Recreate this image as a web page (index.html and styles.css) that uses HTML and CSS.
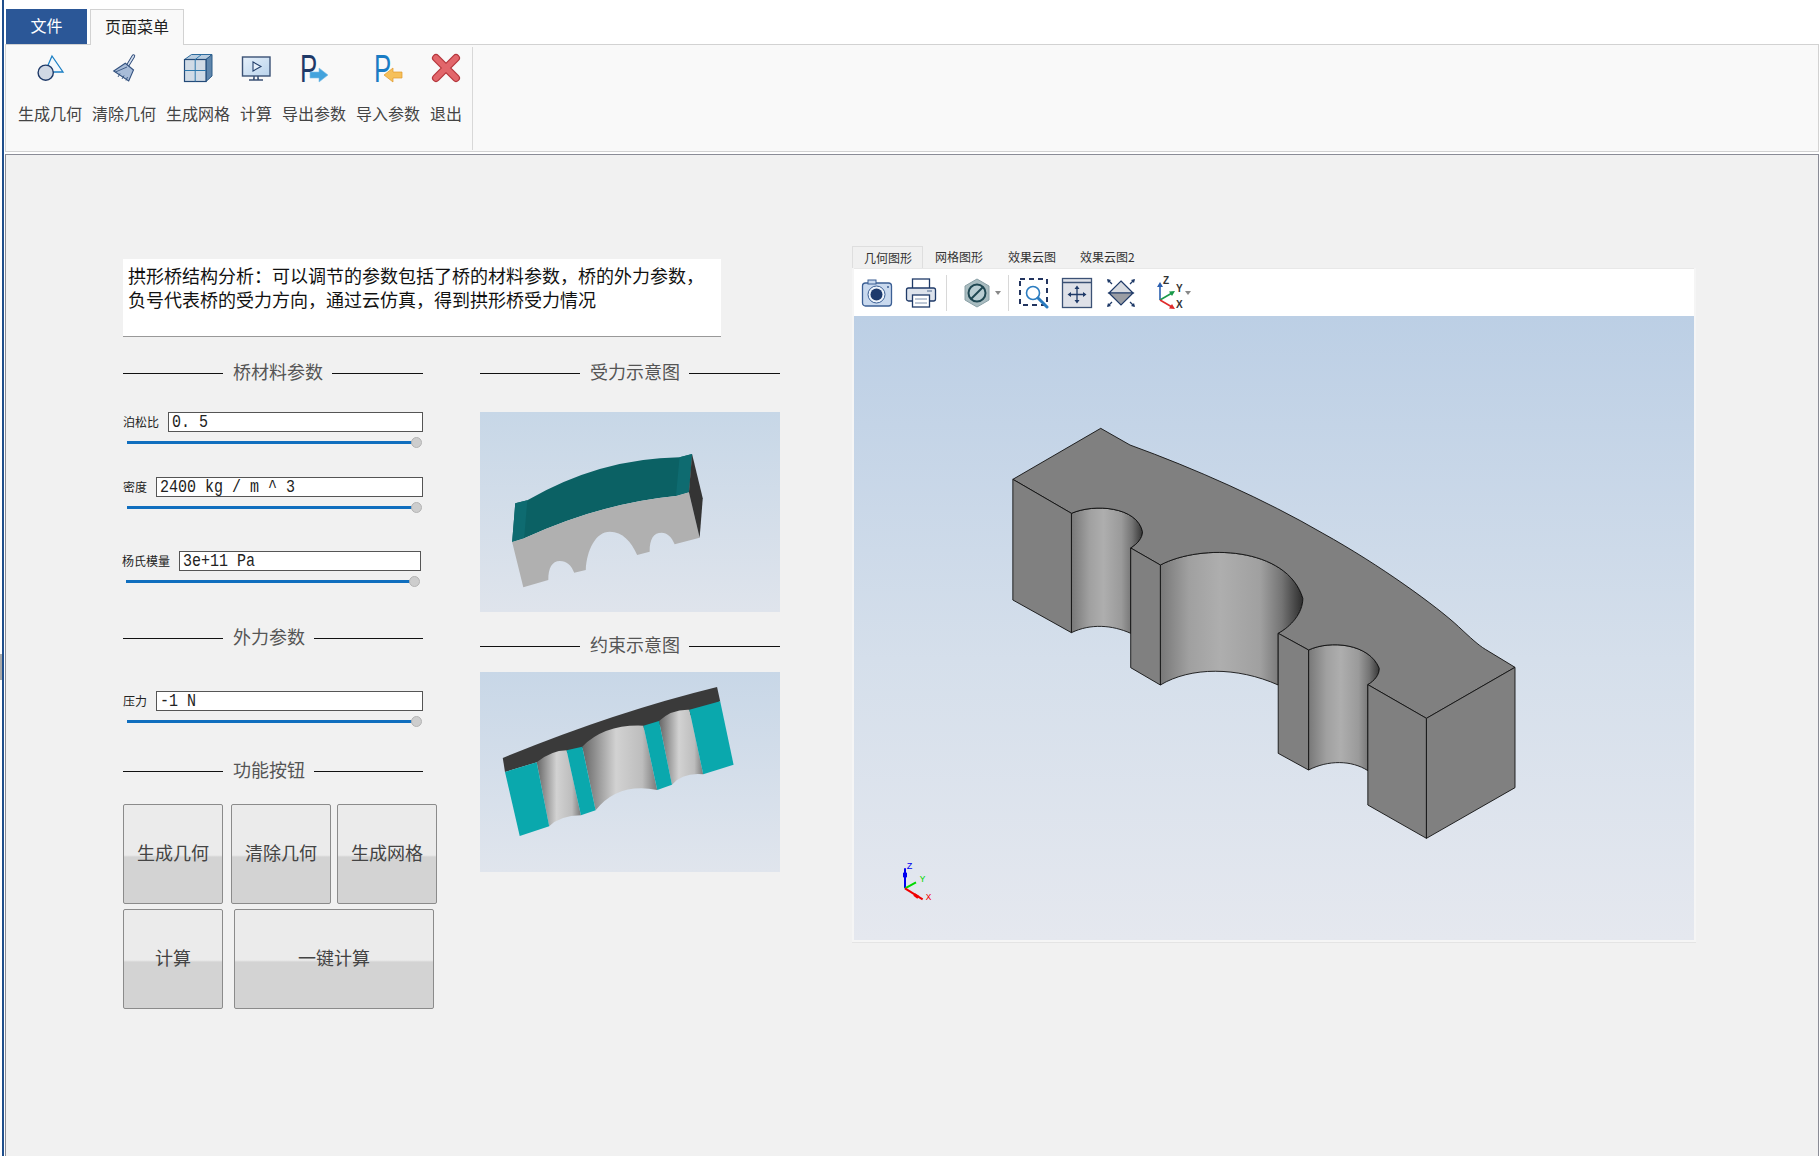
FILE: index.html
```html
<!DOCTYPE html>
<html lang="zh-CN">
<head>
<meta charset="utf-8">
<title>拱形桥结构分析</title>
<link rel="stylesheet" href="styles.css">
</head>
<body>
<div class="edge-notch"></div>
<div class="app">
  <nav class="tabs">
    <div class="tab-file">文件</div>
    <div class="tab-page">页面菜单</div>
  </nav>
  <section class="ribbon">
    <div class="ribbon-item">
      <svg class="ribbon-icon" viewBox="0 0 32 32"><polygon points="18,4 29,20 11,20" fill="#f4f8fc" stroke="#1b7fc4" stroke-width="1.3"/><circle cx="11.7" cy="20.7" r="7.6" fill="#d0d8e4" stroke="#1f3a68" stroke-width="1.4"/></svg>
      <span>生成几何</span>
    </div>
    <div class="ribbon-item">
      <svg class="ribbon-icon" viewBox="0 0 32 32"><path d="M25.5 4 19 14.700" stroke="#2d4a7a" stroke-width="3.400" stroke-linecap="round"/><path d="M25.5 4 19 14.700" stroke="#d5e0ee" stroke-width="1.600" stroke-linecap="round"/><polygon points="5.700,19 17.300,11.300 25.500,18 20.700,29" fill="#a8bcd8" stroke="#34527f" stroke-width="1.100"/><path d="M10 25 12 21.500M14 27 16 23.500M18 28.500 19.500 25M7.500 20 19 15" stroke="#34527f" stroke-width=".9"/></svg>
      <span>清除几何</span>
    </div>
    <div class="ribbon-item">
      <svg class="ribbon-icon" viewBox="0 0 32 32"><polygon points="2.500,7.500 9.500,2.500 30,2.500 24,7.500" fill="#b9cde0" stroke="#2d6a9c"/><polygon points="24,7.500 30,2.500 30,24 24,29.500" fill="#5f86ac" stroke="#2d5c88"/><rect x="2.500" y="7.500" width="21.500" height="22" fill="#d0dbe6" stroke="#234a78" stroke-width="1.200"/><path d="M13.200 7.500V29.500M2.500 18.500H24M13.200 7.500 19.500 2.500" stroke="#2d78ac" fill="none"/></svg>
      <span>生成网格</span>
    </div>
    <div class="ribbon-item">
      <svg class="ribbon-icon" viewBox="0 0 32 32"><defs><linearGradient id="scr" x1="0" y1="0" x2="1" y2="1"><stop offset="0" stop-color="#e6f0fa"/><stop offset="1" stop-color="#b9d3ec"/></linearGradient></defs><rect x="2.500" y="5" width="27.500" height="19" fill="url(#scr)" stroke="#3b5275" stroke-width="1.400"/><polygon points="13,10 13,19 21,14.500" fill="#e6f0fa" stroke="#24406c" stroke-width="1.100"/><path d="M14 24v3h-1M18 24v3h1M9 28h14" stroke="#3b5275" stroke-width="1.500" fill="none"/></svg>
      <span>计算</span>
    </div>
    <div class="ribbon-item">
      <svg class="ribbon-icon ribbon-icon-tall" viewBox="0 -6 32 44"><text class="icon-letter icon-letter-dark" transform="translate(2 30) scale(.68 1)" x="0" y="0">P</text><polygon points="12,20 21,20 21,16 30,23 21,30 21,26 12,26" fill="#43a3dd" stroke="#7cc0ea" stroke-width=".6"/></svg>
      <span>导出参数</span>
    </div>
    <div class="ribbon-item">
      <svg class="ribbon-icon ribbon-icon-tall" viewBox="0 -6 32 44"><text class="icon-letter icon-letter-blue" transform="translate(2 30) scale(.68 1)" x="0" y="0">P</text><polygon points="30,20 21,20 21,16 12,23 21,30 21,26 30,26" fill="#f6c05a" stroke="#e09a2b" stroke-width=".7"/></svg>
      <span>导入参数</span>
    </div>
    <div class="ribbon-item">
      <svg class="ribbon-icon" viewBox="0 0 32 32"><path d="M6 6 26 26M26 6 6 26" stroke="#b5363c" stroke-width="8" stroke-linecap="round"/><path d="M6 6 26 26M26 6 6 26" stroke="#e2666b" stroke-width="5.600" stroke-linecap="round"/></svg>
      <span>退出</span>
    </div>
    <div class="ribbon-sep"></div>
  </section>
  <main class="main">
    <div class="left">
      <p class="desc">拱形桥结构分析：可以调节的参数包括了桥的材料参数，桥的外力参数，<br>负号代表桥的受力方向，通过云仿真，得到拱形桥受力情况</p>
      <div class="cols">
        <div class="col-params">
          <div class="section section-first"><i class="line-l"></i><b>桥材料参数</b><i class="line-r"></i></div>
          <div class="param param-a">
            <div class="field"><label>泊松比</label><div class="input"><span>0. 5</span></div></div>
            <div class="slider"><i class="track"></i><i class="thumb"></i></div>
          </div>
          <div class="param param-b">
            <div class="field"><label>密度</label><div class="input"><span>2400 kg / m ^ 3</span></div></div>
            <div class="slider"><i class="track"></i><i class="thumb"></i></div>
          </div>
          <div class="param param-c">
            <div class="field"><label>杨氏模量</label><div class="input"><span>3e+11 Pa</span></div></div>
            <div class="slider"><i class="track"></i><i class="thumb"></i></div>
          </div>
          <div class="section section-force"><i class="line-l"></i><b>外力参数</b><i class="line-r"></i></div>
          <div class="param param-d">
            <div class="field"><label>压力</label><div class="input"><span>-1 N</span></div></div>
            <div class="slider"><i class="track"></i><i class="thumb"></i></div>
          </div>
          <div class="section section-btn"><i class="line-l"></i><b>功能按钮</b><i class="line-r"></i></div>
          <div class="btn-row btn-row-1">
            <button class="btn">生成几何</button>
            <button class="btn gap-8">清除几何</button>
            <button class="btn gap-6">生成网格</button>
          </div>
          <div class="btn-row btn-row-2">
            <button class="btn">计算</button>
            <button class="btn btn-wide gap-11">一键计算</button>
          </div>
        </div>
        <div class="col-images">
          <div class="section section-first"><i class="line-l"></i><b>受力示意图</b><i class="line-r"></i></div>
          <svg class="thumb-img thumb-img-1" viewBox="851 516 672 600" preserveAspectRatio="none">
            <defs><linearGradient id="mini1" x1="0" y1="0" x2="0" y2="1"><stop offset="0" stop-color="#c7d7e7"/><stop offset="1" stop-color="#dfe4ec"/></linearGradient></defs>
            <rect x="851" y="516" width="672" height="600" fill="url(#mini1)"/>
            <path d="M930 790 957 781Q1120 655 1298 652L1326 642 1319 757 1290 768Q1120 790 950 895L923 906Z" fill="#0b6164"/>
            <path d="M930 790 957 781 950 895 923 906ZM1298 652 1326 642 1319 757 1290 768Z" fill="#0e6b70"/>
            <path d="M923 906 950 895Q1120 790 1290 768L1319 757 1343 893 1287 913C1280 890 1270 878 1258 878 1240 878 1231 895 1231 935L1203 945C1190 905 1170 875 1142 875 1110 875 1090 930 1088 990L1062 998C1055 975 1045 963 1030 963 1012 963 1004 985 1004 1020L948 1042Z" fill="#b0b0b0"/>
            <polygon points="1326,642 1350,775 1343,893 1319,757" fill="#343434"/>
          </svg>
          <div class="section section-constraint"><i class="line-l"></i><b>约束示意图</b><i class="line-r"></i></div>
          <svg class="thumb-img thumb-img-2" viewBox="851 159 672 600" preserveAspectRatio="none">
            <defs>
              <linearGradient id="mini2" x1="0" y1="0" x2="0" y2="1"><stop offset="0" stop-color="#c8d7e7"/><stop offset="1" stop-color="#e0e5ed"/></linearGradient>
              <linearGradient id="cyl2" x1="0" y1="0" x2="1" y2="0"><stop offset="0" stop-color="#666"/><stop offset=".45" stop-color="#d2d2d2"/><stop offset=".8" stop-color="#bdbdbd"/><stop offset="1" stop-color="#7a7a7a"/></linearGradient>
            </defs>
            <rect x="851" y="159" width="672" height="600" fill="url(#mini2)"/>
            <path d="M902 417Q1150 280 1382 204L1389 247 1320 290 907 459Z" fill="#3a3a3a"/>
            <path d="M978 430Q1010 395 1045 394L1077 589Q1030 590 1006 622Z" fill="url(#cyl2)"/>
            <path d="M1080 383Q1130 315 1217 320L1248 513Q1160 490 1110 574Z" fill="url(#cyl2)"/>
            <path d="M1252 306Q1280 270 1320 272L1351 466Q1305 460 1281 497Z" fill="url(#cyl2)"/>
            <polygon points="907,459 978,430 1006,622 940,651" fill="#0aa8ad"/>
            <polygon points="1045,394 1080,383 1110,574 1077,589" fill="#0aa8ad"/>
            <polygon points="1217,320 1252,306 1281,497 1248,513" fill="#0aa8ad"/>
            <polygon points="1320,272 1389,247 1419,437 1351,466" fill="#0aa8ad"/>
          </svg>
        </div>
      </div>
    </div>
    <section class="viewer">
      <div class="viewer-tabs">
        <div class="vtab vtab-on">几何图形</div>
        <div class="vtab">网格图形</div>
        <div class="vtab">效果云图</div>
        <div class="vtab">效果云图2</div>
      </div>
      <div class="viewer-frame">
        <div class="toolbar">
          <svg class="tool" viewBox="0 0 32 32"><rect x="1.500" y="6" width="29" height="23" rx="3" fill="#c9d9ee" stroke="#3b5f94" stroke-width="1.300"/><rect x="7" y="3" width="8" height="4" fill="#c9d9ee" stroke="#3b5f94"/><circle cx="15.500" cy="17.500" r="8.500" fill="#eef4fb" stroke="#3b5f94"/><circle cx="15.500" cy="17.500" r="6" fill="#1d3a6d"/><circle cx="27" cy="10" r="1" fill="#3b5f94"/></svg>
          <svg class="tool" viewBox="0 0 32 32"><rect x="7.500" y="2" width="17" height="10" fill="#fff" stroke="#1f3a68" stroke-width="1.300"/><rect x="1.500" y="11" width="29" height="13" rx="2" fill="#dde3ec" stroke="#1f3a68" stroke-width="1.300"/><rect x="7.500" y="18" width="17" height="12" fill="#fff" stroke="#1f3a68" stroke-width="1.300"/><path d="M10 22h12M10 26h12" stroke="#7d90ac"/><path d="M22 14h5" stroke="#7d90ac" stroke-width="1.500"/></svg>
          <i class="tool-sep"></i>
          <svg class="tool tool-hex" viewBox="0 0 32 32"><polygon points="16,2 28,9 28,23 16,30 4,23 4,9" fill="#a9bcc0" stroke="#8aa0a6"/><circle cx="16" cy="16" r="8.500" fill="#b9cdd2" stroke="#1f4752" stroke-width="2"/><path d="M10 22 22 10" stroke="#1f4752" stroke-width="2"/></svg>
          <i class="caret"></i>
          <i class="tool-sep tool-sep-2"></i>
          <svg class="tool tool-zoom" viewBox="0 0 32 32"><rect x="2" y="2" width="27" height="26" fill="none" stroke="#22345e" stroke-width="2" stroke-dasharray="5 4"/><circle cx="15" cy="16" r="6.500" fill="#fff" stroke="#2b7cc0" stroke-width="1.600"/><path d="M20 21 29 30" stroke="#2b7cc0" stroke-width="3" stroke-linecap="round"/></svg>
          <svg class="tool tool-pan" viewBox="0 0 32 32"><rect x="1.500" y="1.500" width="29" height="29" fill="#dfe1e8" stroke="#3b5175" stroke-width="1.300"/><path d="M1.500 5.500H30.500" stroke="#3b5175" stroke-width="1.500"/><path d="M16 10V25M8 17.500H24" stroke="#1f3a68" stroke-width="1.300"/><path d="M16 8.500 13.500 12H18.500ZM16 26.500 13.500 23H18.500ZM6.500 17.500 10 15V20ZM25.500 17.500 22 15V20Z" fill="#1f3a68"/></svg>
          <svg class="tool" viewBox="0 0 32 32"><polygon points="16,4 28,16 4,16" fill="#d8dbe0" stroke="#1f3a68" stroke-width="1.200"/><polygon points="4,16 28,16 16,28" fill="#9a9da3" stroke="#1f3a68" stroke-width="1.200"/><path d="M25 7 29 3M7 7 3 3M25 25 29 29M7 25 3 29" stroke="#1f3a68" stroke-width="1.300"/><path d="M30 2 26 3 29 6ZM2 2 6 3 3 6ZM30 30 26 29 29 26ZM2 30 6 29 3 26Z" fill="#1f3a68"/></svg>
          <svg class="tool tool-axes" viewBox="0 0 32 34">
            <path d="M5 24V9" stroke="#2b5fb0" stroke-width="1.600"/><polygon points="5,6 2,11 8,11" fill="#2b5fb0"/>
            <path d="M5 24 17 17" stroke="#1a9a4a" stroke-width="1.600"/><polygon points="20,15 14,15.500 17,20" fill="#1a9a4a"/>
            <path d="M5 24 17 31" stroke="#e02a2a" stroke-width="1.600"/><polygon points="20,33 14,32.500 17,28" fill="#e02a2a"/>
            <text class="axis-label" x="8" y="8">Z</text><text class="axis-label" x="21" y="16">Y</text><text class="axis-label" x="21" y="32">X</text>
          </svg>
          <i class="caret caret-axes"></i>
        </div>
        <div class="canvas">
          <svg class="model" viewBox="0 0 1568 1350" preserveAspectRatio="none">
            <defs>
              <linearGradient id="cyl-a" gradientUnits="userSpaceOnUse" x1="256" y1="0" x2="456" y2="0"><stop offset="0" stop-color="#787878"/><stop offset=".25" stop-color="#a0a0a0"/><stop offset=".45" stop-color="#aeaeae"/><stop offset=".7" stop-color="#9a9a9a"/><stop offset=".85" stop-color="#747474"/><stop offset="1" stop-color="#333"/></linearGradient>
              <linearGradient id="cyl-b" gradientUnits="userSpaceOnUse" x1="505" y1="0" x2="905" y2="0"><stop offset="0" stop-color="#787878"/><stop offset=".2" stop-color="#a0a0a0"/><stop offset=".42" stop-color="#aeaeae"/><stop offset=".7" stop-color="#a0a0a0"/><stop offset=".85" stop-color="#747474"/><stop offset="1" stop-color="#2c2c2c"/></linearGradient>
              <linearGradient id="cyl-c" gradientUnits="userSpaceOnUse" x1="920" y1="0" x2="1120" y2="0"><stop offset="0" stop-color="#787878"/><stop offset=".25" stop-color="#a0a0a0"/><stop offset=".45" stop-color="#aeaeae"/><stop offset=".7" stop-color="#9a9a9a"/><stop offset=".85" stop-color="#747474"/><stop offset="1" stop-color="#333"/></linearGradient>
            </defs>
            <g stroke="#111" stroke-width="2.600" stroke-linejoin="round">
              <path d="M256 668V310C320 280 440 290 455 365C455 385 440 402 422 414V670C370 645 310 640 256 668Z" fill="url(#cyl-a)"/>
              <path d="M505 825V465C620 400 860 410 904 565C904 610 870 650 835 670V825C720 770 590 770 505 825Z" fill="url(#cyl-b)"/>
              <path d="M920 1080V720C980 690 1090 700 1118 775C1118 795 1105 812 1086 824V1082C1040 1050 975 1050 920 1080Z" fill="url(#cyl-c)"/>
              <path d="M92 208 338 55 420 105C600 175 800 270 960 370C1120 465 1280 590 1340 650C1375 685 1395 705 1415 718L1498 772 1250 925 1086 824C1105 812 1118 795 1118 775C1090 700 980 690 920 720L835 670C870 650 904 610 904 565C860 410 620 400 505 465L422 414C440 402 455 385 455 365C440 290 320 280 256 310Z" fill="#808080"/>
              <polygon points="92,208 256,310 256,668 92,570" fill="#808080"/>
              <polygon points="422,414 505,465 505,825 422,773" fill="#808080"/>
              <polygon points="835,670 920,720 920,1080 835,1030" fill="#808080"/>
              <polygon points="1086,824 1250,925 1250,1285 1086,1185" fill="#808080"/>
              <polygon points="1250,925 1498,772 1498,1133 1250,1285" fill="#808080"/>
            </g>
          </svg>
          <svg class="triad" viewBox="0 0 300 300">
            <path d="M75 145V85" stroke="#0000f0" stroke-width="6"/><polygon points="69,98 81,98 81,112 69,112" fill="#0000f0"/>
            <path d="M75 145 108 127" stroke="#00d800" stroke-width="6"/>
            <path d="M75 145 128 178" stroke="#f00000" stroke-width="6"/><polygon points="105,160 118,168 112,176 100,167" fill="#f00000"/>
            <text class="triad-z" x="80" y="87">Z</text><text class="triad-y" x="119" y="125">Y</text><text class="triad-x" x="137" y="180">X</text>
          </svg>
        </div>
      </div>
    </section>
  </main>
</div>
</body>
</html>
```

FILE: styles.css
```css
* { box-sizing: border-box; }
html, body { margin: 0; padding: 0; background: #fff; }
body {
  height: 1156px;
  overflow: hidden;
  font-family: "Noto Sans CJK SC", "Liberation Sans", sans-serif;
  color: #333;
}
i { display: block; }
.edge-notch {
  position: absolute;
  left: 0;
  top: 654px;
  width: 2px;
  height: 26px;
  background: #a9a9a9;
}
.app {
  height: 1156px;
  width: 1817px;
  margin-left: 2px;
  border-left: 2px solid #1f4e8c;
  padding-left: 1px;
  display: flex;
  flex-direction: column;
}
.tabs {
  display: flex;
  height: 36px;
  margin-top: 9px;
  padding-left: 1px;
  margin-bottom: -1px;
  position: relative;
  z-index: 1;
}
.tab-file {
  width: 81px;
  height: 35px;
  background: #2b5797;
  color: #fff;
  font-size: 16px;
  line-height: 33px;
  text-align: center;
}
.tab-page {
  width: 94px;
  margin-left: 3px;
  height: 36px;
  background: #f9f9f9;
  border: 1px solid #d2d2d2;
  border-bottom: 0;
  font-size: 16px;
  line-height: 32px;
  text-align: center;
  color: #222;
}
.ribbon {
  height: 108px;
  background: #f9f9f9;
  border: 1px solid #d2d2d2;
  display: flex;
  gap: 10px;
  padding: 7px 0 0 12px;
  flex: none;
}
.ribbon-item {
  display: flex;
  flex-direction: column;
  align-items: center;
  font-size: 16px;
  line-height: 22px;
  color: #444;
}
.ribbon-icon { width: 32px; height: 32px; margin-bottom: 18px; fill: none; flex: none; }
.ribbon-icon-tall { height: 44px; margin-top: -6px; margin-bottom: 12px; }
.ribbon-sep { width: 1px; height: 103px; margin-top: -5px; background: #d8d8d8; }
.icon-letter { font-family: "Liberation Sans", sans-serif; font-size: 38px; }
.icon-letter-dark { fill: #1f3a68; }
.icon-letter-blue { fill: #1a7cc4; }
.main {
  flex: 1;
  margin-top: 2px;
  background: #f1f1f1;
  border: 1px solid #8a8c96;
  border-bottom: 0;
  display: flex;
  padding: 91px 0 0 117px;
  min-height: 0;
}
.left { width: 729px; padding-top: 13px; flex: none; }
.desc {
  margin: 0;
  width: 598px;
  height: 78px;
  padding: 4px 5px 0;
  background: #fff;
  border-bottom: 1px solid #999;
  font-size: 18px;
  line-height: 24px;
  color: #111;
  white-space: nowrap;
}
.cols { display: flex; }
.col-params { width: 357px; flex: none; }
.col-images { width: 300px; flex: none; }
.section {
  display: flex;
  align-items: center;
  width: 300px;
  height: 24px;
  font-size: 18px;
  line-height: 24px;
  color: #555;
}
.section b { font-weight: 400; margin: 0 9px 4px 10px; white-space: nowrap; }
.line-l { width: 100px; height: 1px; background: #111; flex: none; }
.line-r { flex: 1; height: 1px; background: #111; }
.section-first { margin-top: 24px; }
.section-force { margin-top: 39px; }
.section-btn { margin-top: 32px; }
.section-constraint { margin-top: 22px; }
.param { width: 300px; }
.param-a { margin-top: 27px; }
.param-b { margin-top: 29px; }
.param-c { margin-top: 38px; margin-left: -1px; width: 299px; }
.param-d { margin-top: 41px; }
.field { display: flex; align-items: center; height: 20px; gap: 9px; }
.field label { font-size: 12px; line-height: 16px; color: #222; white-space: nowrap; }
.input {
  flex: 1;
  height: 20px;
  background: #fff;
  border: 1px solid #555;
  padding-left: 3px;
  font-family: "Liberation Mono", monospace;
  font-size: 15px;
  line-height: 20px;
  color: #222;
  white-space: pre;
}
.input span { display: inline-block; transform: scaleY(1.2); }
.slider { display: flex; align-items: center; height: 11px; margin: 5px 1px 0 4px; }
.track { flex: 1; height: 3px; background: #106ebe; }
.thumb { width: 11px; height: 11px; border-radius: 50%; background: #cdcdcd; border: 1px solid #b4b4b4; margin-left: -1px; flex: none; }
.btn-row { display: flex; }
.btn-row-1 { margin-top: 21px; }
.btn-row-2 { margin-top: 5px; }
.btn {
  width: 100px;
  height: 100px;
  padding: 0 0 4px;
  border: 1px solid #8b8b8b;
  border-radius: 2px;
  background: linear-gradient(#ebebeb 0, #ebebeb 51%, #e2e2e2 52%, #d3d3d3 53%, #d3d3d3 100%);
  font-family: inherit;
  font-size: 18px;
  color: #444;
}
.btn-wide { width: 200px; }
.gap-8 { margin-left: 8px; }
.gap-6 { margin-left: 6px; }
.gap-11 { margin-left: 11px; }
.thumb-img { display: block; width: 300px; height: 200px; }
.thumb-img-1 { margin-top: 27px; }
.thumb-img-2 { margin-top: 14px; }
.viewer { width: 844px; flex: none; }
.viewer-tabs { display: flex; height: 22px; font-size: 12px; line-height: 22px; color: #333; }
.vtab { padding: 0 12px; white-space: nowrap; }
.vtab:nth-child(2) { margin-right: 1px; }
.vtab-on { width: 71px; padding: 0 11px; background: #f0f0f0; border: 1px solid #dedede; border-bottom: 0; text-align: center; }
.viewer-frame {
  height: 674px;
  border: 2px solid #f5f5f5;
  border-top: 0;
  box-shadow: 0 1px 0 #e4e4e4;
  display: flex;
  flex-direction: column;
}
.toolbar { height: 48px; flex: none; background: #fff; border-top: 1px solid #e8e8e8; display: flex; align-items: center; padding-left: 7px; gap: 12px; }
.tool { width: 32px; height: 32px; flex: none; fill: none; }
.tool-axes { height: 34px; margin-left: 6px; }
.tool-sep { width: 1px; height: 36px; background: #d8d8d8; margin: 0 -1px 0 -3px; flex: none; }
.tool-hex { margin-left: 3px; }
.tool-sep-2 { margin-left: -5px; }
.tool-zoom { margin-left: -2px; }
.tool-pan { margin-left: -1px; }
.caret { width: 0; height: 0; border: 3px solid transparent; border-top: 4px solid #888; border-bottom: 0; margin-left: -10px; flex: none; }
.caret-axes { margin-left: -14px; }
.canvas {
  flex: 1;
  position: relative;
  background: linear-gradient(#bccfe5 0%, #d5dfeb 55%, #e5e8ef 100%);
}
.model { position: absolute; left: 126px; top: 94px; width: 560px; height: 450px; }
.triad { position: absolute; left: 26px; top: 524px; width: 100px; height: 100px; }
.axis-label { font-family: "Liberation Sans", sans-serif; font-size: 10px; font-weight: 700; fill: #333; }
.triad-z, .triad-y, .triad-x { font-family: "Liberation Mono", monospace; font-size: 28px; }
.triad-z { fill: #0000f0; }
.triad-y { fill: #00d800; }
.triad-x { fill: #f00000; }
```
